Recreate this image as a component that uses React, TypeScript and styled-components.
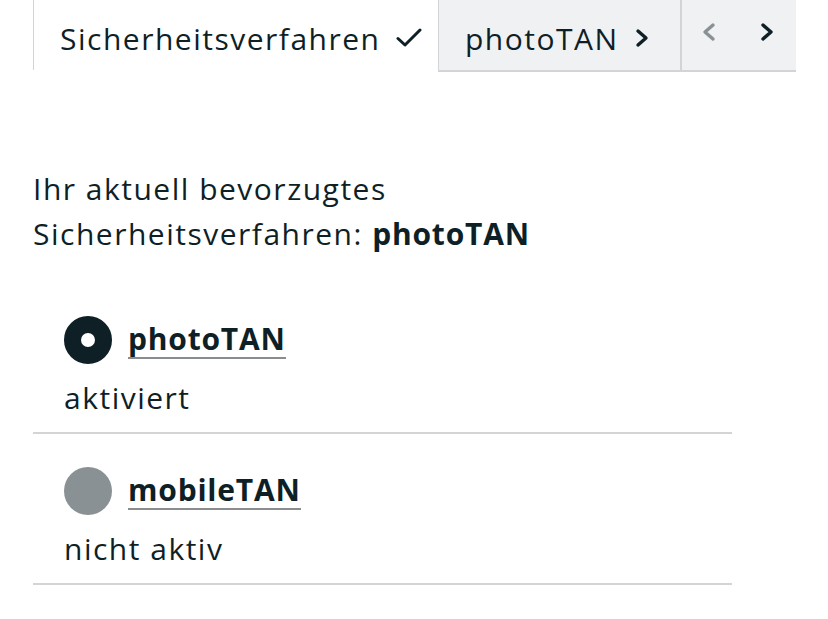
import React from "react";
import styled, { createGlobalStyle } from "styled-components";

const GlobalStyle = createGlobalStyle`
  html, body {
    margin: 0;
    padding: 0;
    background: #ffffff;
  }
  body {
    font-family: "Open Sans", "Liberation Sans", sans-serif;
    color: #0f1f26;
  }
`;

interface Method {
  name: string;
  status: string;
  active: boolean;
}

const methods: Method[] = [
  { name: "photoTAN", status: "aktiviert", active: true },
  { name: "mobileTAN", status: "nicht aktiv", active: false },
];

export default function App() {
  return (
    <Page>
      <GlobalStyle />
      <TabBar>
        <Tab active width={405}>
          Sicherheitsverfahren
          <Check />
        </Tab>
        <Tab width={242}>
          photoTAN
          <Chevron dir="right" />
        </Tab>
        <Pager>
          <PagerButton disabled>
            <Chevron dir="left" />
          </PagerButton>
          <PagerButton>
            <Chevron dir="right" />
          </PagerButton>
        </Pager>
      </TabBar>

      <Intro>
        Ihr aktuell bevorzugtes
        <br />
        Sicherheitsverfahren: <strong>photoTAN</strong>
      </Intro>

      <List>
        {methods.map((m) => (
          <Item key={m.name}>
            <ItemHead>
              <Radio active={m.active} />
              <MethodLink>{m.name}</MethodLink>
            </ItemHead>
            <Status>{m.status}</Status>
          </Item>
        ))}
      </List>
    </Page>
  );
}

function Check() {
  return (
    <CheckIcon viewBox="0 0 26 20" width="26" height="20">
      <path
        d="M2 10.5 L9 17 L24 2"
        fill="none"
        stroke="currentColor"
        strokeWidth="3"
        strokeLinecap="round"
        strokeLinejoin="round"
      />
    </CheckIcon>
  );
}

function Chevron({ dir }: { dir: "left" | "right" }) {
  return (
    <ChevronIcon viewBox="0 0 14 20" width="14" height="20">
      <path
        d={dir === "right" ? "M3 3 L11 10 L3 17" : "M11 3 L3 10 L11 17"}
        fill="none"
        stroke="currentColor"
        strokeWidth="3.4"
        strokeLinecap="round"
        strokeLinejoin="round"
      />
    </ChevronIcon>
  );
}

const Page = styled.div`
  padding-left: 33px;
  width: 763px;
`;

const TabBar = styled.div`
  display: flex;
  height: 72px;
`;

const Tab = styled.div<{ active?: boolean; width: number }>`
  display: flex;
  align-items: center;
  gap: 16px;
  flex: none;
  box-sizing: border-box;
  width: ${({ width }) => width}px;
  height: ${({ active }) => (active ? "70px" : "72px")};
  padding: 6px 0 0 26px;
  border-left: 1px solid #d2d4d6;
  border-bottom: ${({ active }) => (active ? "none" : "2px solid #d2d4d6")};
  background: ${({ active }) => (active ? "#ffffff" : "#f0f1f3")};
  font-size: 30px;
  letter-spacing: 1.5px;
  white-space: nowrap;
  color: #0f1f26;
`;

const Pager = styled.div`
  display: flex;
  align-items: flex-start;
  box-sizing: border-box;
  width: 116px;
  height: 72px;
  padding-top: 22px;
  border-left: 2px solid #d2d4d6;
  border-bottom: 2px solid #d2d4d6;
  background: #f0f1f3;
`;

const PagerButton = styled.div<{ disabled?: boolean }>`
  display: flex;
  justify-content: center;
  width: 58px;
  margin-left: ${({ disabled }) => (disabled ? "-2px" : "0")};
  color: ${({ disabled }) => (disabled ? "#8a9194" : "#0f1f26")};
`;

const CheckIcon = styled.svg`
  flex: none;
  color: #0f1f26;
`;

const ChevronIcon = styled.svg`
  flex: none;
`;

const Intro = styled.p`
  margin: 94px 0 0;
  font-size: 30px;
  line-height: 45px;
  letter-spacing: 1.5px;

  strong {
    font-weight: 700;
    letter-spacing: 0.8px;
  }
`;

const List = styled.div`
  margin-top: 27px;
  width: 699px;
`;

const Item = styled.div`
  display: flex;
  flex-direction: column;
  padding: 33px 0 14px 31px;
  border-bottom: 2px solid #d2d4d6;
`;

const ItemHead = styled.div`
  display: flex;
  align-items: center;
  gap: 16px;
  height: 48px;
`;

const Radio = styled.span<{ active: boolean }>`
  box-sizing: border-box;
  width: 48px;
  height: 48px;
  border-radius: 50%;
  flex: none;
  background: ${({ active }) => (active ? "#ffffff" : "#8a9194")};
  border: ${({ active }) => (active ? "17px solid #0f1f26" : "none")};
`;

const MethodLink = styled.span`
  font-size: 30px;
  font-weight: 700;
  letter-spacing: 0.8px;
  line-height: 36px;
  border-bottom: 2px solid #8a8d8f;
`;

const Status = styled.div`
  margin-top: 14px;
  font-size: 30px;
  line-height: 40px;
  letter-spacing: 1.5px;
`;
